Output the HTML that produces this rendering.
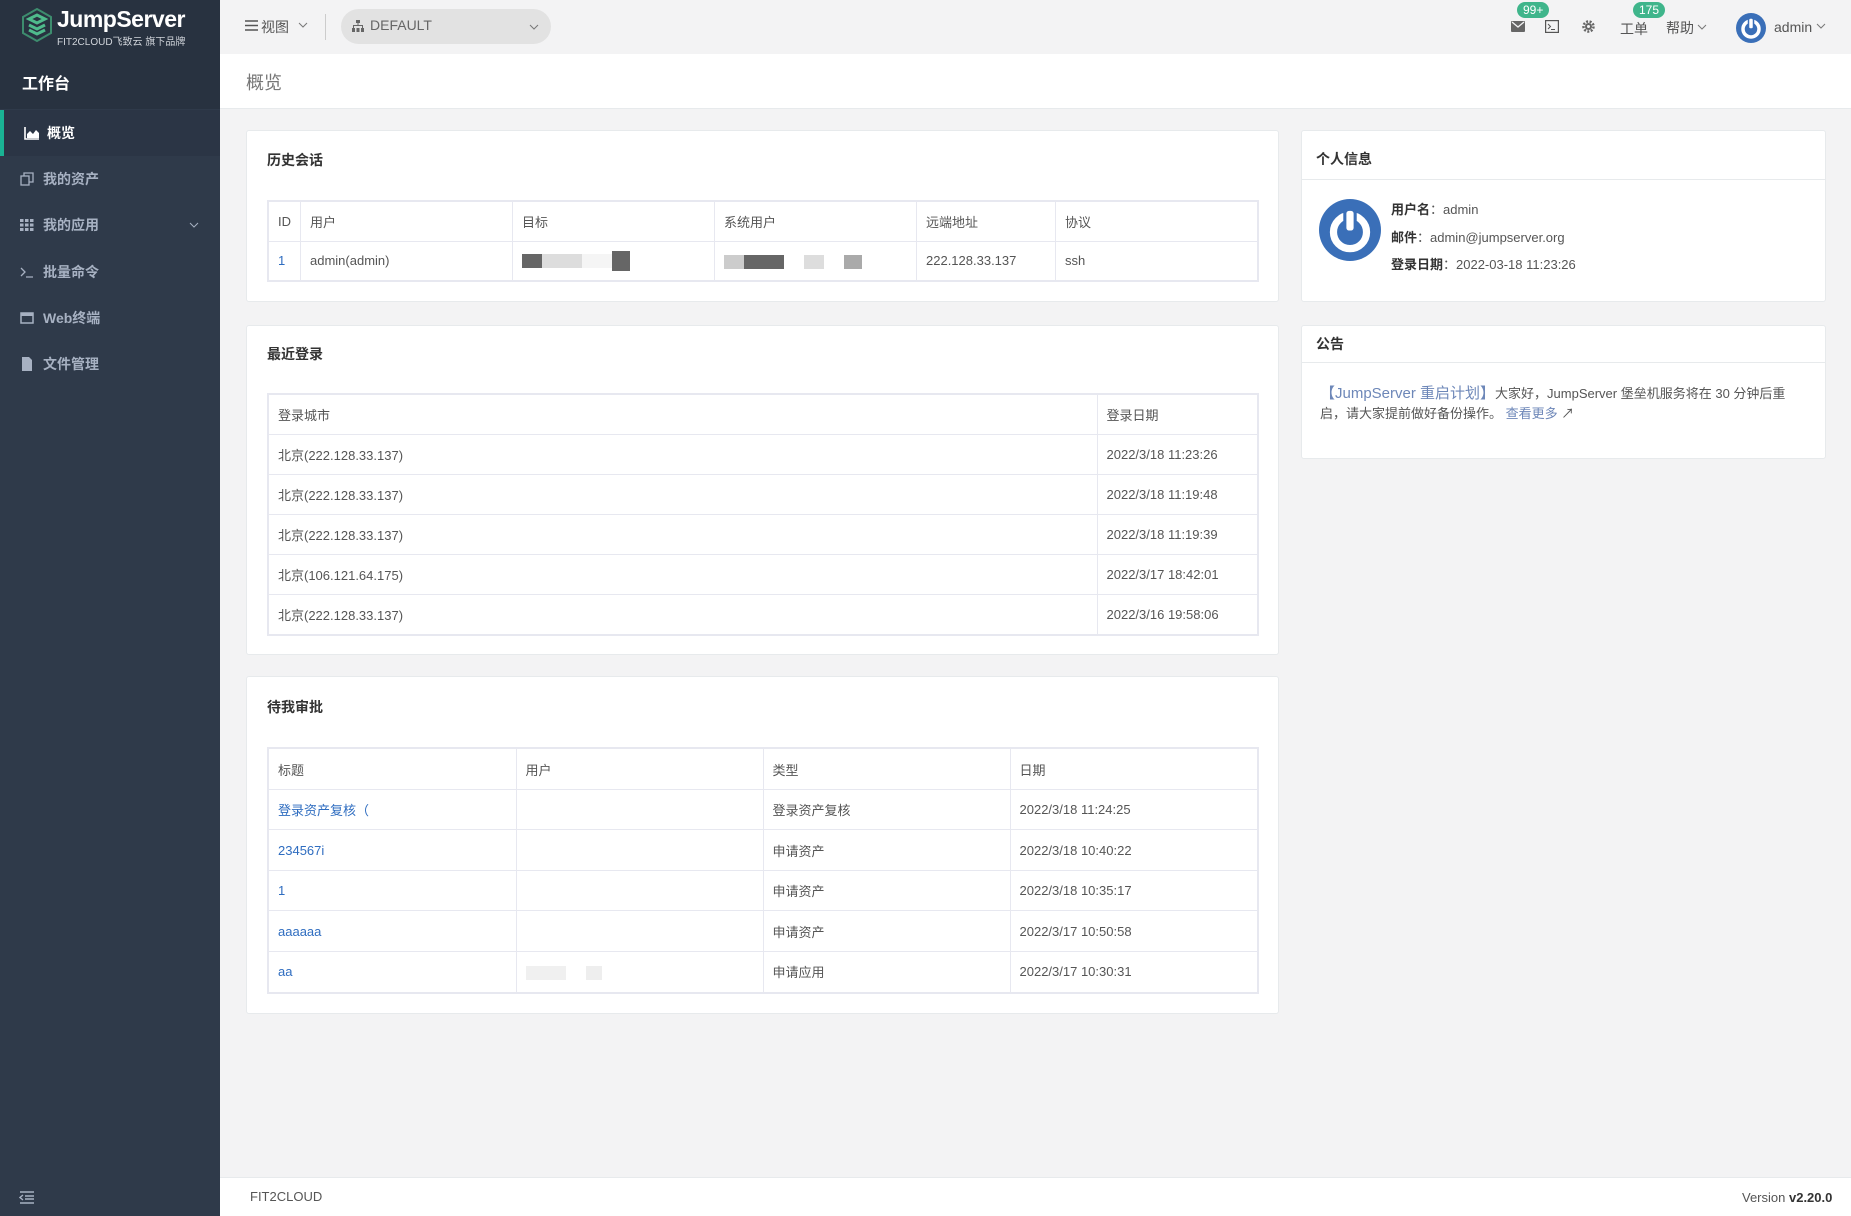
<!DOCTYPE html>
<html><head><meta charset="utf-8"><style>
*{box-sizing:border-box;margin:0;padding:0}
body{width:1851px;height:1216px;overflow:hidden;background:#f3f3f4;font-family:"Liberation Sans","Noto Sans CJK SC",sans-serif;font-size:14px;color:#555;position:relative}
.a{position:absolute}
#side{left:0;top:0;width:220px;height:1216px;background:#2f3a4a}
#sidetop{left:0;top:0;width:220px;height:109px;background:#283240}
.mi{position:absolute;left:0;width:220px;height:46px;color:#a7b1c2;font-size:14px;font-weight:bold;line-height:46px}
.mi svg{position:absolute;left:20px;top:16px}
.mi span{position:absolute;left:43px}
#hdr{left:220px;top:0;width:1631px;height:54px;background:#f3f3f4}
#title{left:220px;top:54px;width:1631px;height:55px;background:#fff;border-bottom:1px solid #e7eaec}
.card{position:absolute;background:#fff;border:1px solid #e7eaec;border-radius:3px}
.ct{position:absolute;left:20px;font-size:14px;font-weight:bold;color:#333}
table{position:absolute;border-collapse:collapse;border:2px solid #e7e8f0;font-size:13px;color:#555}
td{border:1px solid #e7e8f0;padding:0 9px;vertical-align:middle;white-space:nowrap}
th{border:1px solid #e7e8f0;padding:0 9px;text-align:left;font-weight:normal;color:#555;vertical-align:middle}
a{color:#2f6dc0;text-decoration:none}
.bl{display:inline-block;height:14px;vertical-align:middle}
.badge{position:absolute;background:#3fb58b;color:#fff;font-size:12px;border-radius:9px;height:16px;line-height:16px;padding:0 6px}
</style></head><body>
<div id="side" class="a"></div>
<div id="sidetop" class="a"></div>
<svg class="a" style="left:22px;top:8px" width="30" height="34" viewBox="0 0 30 34"><path d="M15 1 L29 9 L29 25 L15 33 L1 25 L1 9 Z" fill="none" stroke="#3d8c6e" stroke-width="2"/><path d="M7 11 L15 7 L23 11 L15 15 Z M7 17 L15 21 L23 17 M7 22 L15 26 L23 22" fill="none" stroke="#4fbb8c" stroke-width="3"/></svg>
<div class="a" style="left:57px;top:6px;color:#fff;font-size:23px;font-weight:bold;letter-spacing:-0.5px">JumpServer</div>
<div class="a" style="left:57px;top:33px;color:#d0d4da;font-size:10px">FIT2CLOUD飞致云 旗下品牌</div>
<div class="a" style="left:22px;top:70px;color:#fff;font-size:16px;font-weight:bold">工作台</div>
<div class="mi" style="top:110px;background:#2b3545;color:#fff;border-left:4px solid #1ab394"><svg width="16" height="14" viewBox="0 0 16 14" style="left:20px"><path d="M1 1V13H15" stroke="#fff" stroke-width="1.6" fill="none"/><path d="M3 12V8L6 5L9 8L12 4L15 7V12Z" fill="#fff"/></svg><span style="left:43px">概览</span></div>
<div class="mi" style="top:156px"><svg width="14" height="14" viewBox="0 0 14 14"><rect x="1" y="4" width="8" height="9" fill="none" stroke="#a7b1c2" stroke-width="1.3"/><path d="M4 4V1H13V10H9" fill="none" stroke="#a7b1c2" stroke-width="1.3"/></svg><span>我的资产</span></div>
<div class="mi" style="top:202px"><svg width="14" height="14" viewBox="0 0 14 14" fill="#a7b1c2"><rect x="0" y="1" width="3.5" height="3"/><rect x="5" y="1" width="3.5" height="3"/><rect x="10" y="1" width="3.5" height="3"/><rect x="0" y="5.5" width="3.5" height="3"/><rect x="5" y="5.5" width="3.5" height="3"/><rect x="10" y="5.5" width="3.5" height="3"/><rect x="0" y="10" width="3.5" height="3"/><rect x="5" y="10" width="3.5" height="3"/><rect x="10" y="10" width="3.5" height="3"/></svg><span>我的应用</span><svg width="10" height="8" style="left:189px;top:19px" viewBox="0 0 10 8"><path d="M1 2L5 6L9 2" stroke="#a7b1c2" fill="none"/></svg></div>
<div class="mi" style="top:249px"><svg width="14" height="14" viewBox="0 0 14 14"><path d="M1 3L5 7L1 11M6 12H13" stroke="#a7b1c2" stroke-width="1.3" fill="none"/></svg><span>批量命令</span></div>
<div class="mi" style="top:295px"><svg width="14" height="14" viewBox="0 0 14 14"><rect x="1" y="2" width="12" height="10" fill="none" stroke="#a7b1c2" stroke-width="1.5"/><rect x="1" y="2" width="12" height="3" fill="#a7b1c2"/></svg><span>Web终端</span></div>
<div class="mi" style="top:341px"><svg width="14" height="14" viewBox="0 0 14 14"><path d="M2 0H9L12 3V14H2Z" fill="#a7b1c2"/></svg><span>文件管理</span></div>
<svg class="a" style="left:19px;top:1191px" width="16" height="13" viewBox="0 0 16 13"><path d="M1 1H15M6 5H15M6 8H15M1 12H15M4 4L1 6.5L4 9" stroke="#a7b1c2" stroke-width="1.4" fill="none"/></svg>

<div id="hdr" class="a"></div>
<svg class="a" style="left:245px;top:20px" width="13" height="11" viewBox="0 0 13 11"><path d="M0 1H13M0 5.5H13M0 10H13" stroke="#555" stroke-width="1.5"/></svg>
<div class="a" style="left:261px;top:17px;font-size:14px;color:#555">视图</div>
<svg class="a" style="left:298px;top:22px" width="10" height="7" viewBox="0 0 10 7"><path d="M1 1L5 5L9 1" stroke="#777" fill="none"/></svg>
<div class="a" style="left:325px;top:14px;width:1px;height:26px;background:#ccc"></div>
<div class="a" style="left:341px;top:9px;width:210px;height:35px;background:#e2e2e2;border-radius:18px"></div>
<svg class="a" style="left:352px;top:20px" width="12" height="12" viewBox="0 0 12 12" fill="#666"><rect x="4" y="0" width="4" height="3"/><rect x="5.5" y="3" width="1" height="3"/><rect x="1" y="5" width="10" height="1"/><rect x="1" y="5" width="1" height="3"/><rect x="10" y="5" width="1" height="3"/><rect x="0" y="8" width="3" height="4"/><rect x="4.5" y="8" width="3" height="4"/><rect x="9" y="8" width="3" height="4"/></svg>
<div class="a" style="left:370px;top:17px;font-size:14px;color:#666">DEFAULT</div>
<svg class="a" style="left:529px;top:24px" width="10" height="7" viewBox="0 0 10 7"><path d="M1 1L5 5L9 1" stroke="#777" fill="none"/></svg>
<svg class="a" style="left:1511px;top:21px" width="14" height="11" viewBox="0 0 14 11"><rect width="14" height="11" rx="1" fill="#666"/><path d="M1 1L7 6L13 1" stroke="#f3f3f4" stroke-width="1.3" fill="none"/></svg>
<div class="badge" style="left:1517px;top:2px">99+</div>
<svg class="a" style="left:1545px;top:20px" width="14" height="13" viewBox="0 0 14 13"><rect x="0.6" y="0.6" width="12.8" height="11.8" fill="none" stroke="#555" stroke-width="1.2"/><path d="M3 4L5.5 6.5L3 9M6 9.5H10" stroke="#555" fill="none"/></svg>
<svg class="a" style="left:1582px;top:20px" width="13" height="13" viewBox="0 0 13 13"><circle cx="6.5" cy="6.5" r="5" fill="none" stroke="#666" stroke-width="2.5" stroke-dasharray="2 1.5"/><circle cx="6.5" cy="6.5" r="3.5" fill="#666"/><circle cx="6.5" cy="6.5" r="1.5" fill="#f3f3f4"/></svg>
<div class="a" style="left:1620px;top:19px;font-size:14px;color:#555">工单</div>
<div class="badge" style="left:1633px;top:2px">175</div>
<div class="a" style="left:1666px;top:18px;font-size:14px;color:#555">帮助</div>
<svg class="a" style="left:1697px;top:24px" width="10" height="7" viewBox="0 0 10 7"><path d="M1 1L5 5L9 1" stroke="#777" fill="none"/></svg>
<svg class="a" style="left:1736px;top:13px" width="30" height="30" viewBox="0 0 30 30"><circle cx="15" cy="15" r="15" fill="#3a6fb8"/><circle cx="15" cy="16" r="8" fill="none" stroke="#fff" stroke-width="3.5"/><rect x="12.5" y="5" width="5" height="11" rx="2" fill="#fff" stroke="#3a6fb8" stroke-width="1.5"/></svg>
<div class="a" style="left:1774px;top:19px;font-size:14px;color:#555">admin</div>
<svg class="a" style="left:1816px;top:23px" width="10" height="7" viewBox="0 0 10 7"><path d="M1 1L5 5L9 1" stroke="#777" fill="none"/></svg>

<div id="title" class="a"></div>
<div class="a" style="left:246px;top:69px;font-size:18px;color:#777">概览</div>

<div class="card" style="left:246px;top:130px;width:1033px;height:172px">
<div class="ct" style="top:19px">历史会话</div>
<table style="left:20px;top:69px;width:992px;height:82px">
<tr style="height:40px"><th style="width:32px">ID</th><th style="width:212px">用户</th><th style="width:202px">目标</th><th style="width:202px">系统用户</th><th style="width:139px">远端地址</th><th>协议</th></tr>
<tr><td><a>1</a></td><td>admin(admin)</td><td><span class="bl" style="width:20px;background:#666"></span><span class="bl" style="width:40px;background:#ddd"></span><span class="bl" style="width:30px;background:#f5f5f5"></span><span class="bl" style="width:18px;background:#666;height:20px"></span></td><td><span class="bl" style="width:20px;background:#ccc"></span><span class="bl" style="width:40px;background:#666"></span><span class="bl" style="width:20px;background:#fff"></span><span class="bl" style="width:20px;background:#ddd"></span><span class="bl" style="width:20px;background:#fff"></span><span class="bl" style="width:18px;background:#aaa"></span></td><td>222.128.33.137</td><td>ssh</td></tr>
</table></div>

<div class="card" style="left:246px;top:325px;width:1033px;height:330px">
<div class="ct" style="top:18px">最近登录</div>
<table style="left:20px;top:67px;width:992px;height:243px">
<tr><th>登录城市</th><th style="width:161px">登录日期</th></tr>
<tr><td>北京(222.128.33.137)</td><td>2022/3/18 11:23:26</td></tr>
<tr><td>北京(222.128.33.137)</td><td>2022/3/18 11:19:48</td></tr>
<tr><td>北京(222.128.33.137)</td><td>2022/3/18 11:19:39</td></tr>
<tr><td>北京(106.121.64.175)</td><td>2022/3/17 18:42:01</td></tr>
<tr><td>北京(222.128.33.137)</td><td>2022/3/16 19:58:06</td></tr>
</table></div>

<div class="card" style="left:246px;top:676px;width:1033px;height:338px">
<div class="ct" style="top:20px">待我审批</div>
<table style="left:20px;top:70px;width:992px;height:247px">
<tr><th style="width:248px">标题</th><th style="width:247px">用户</th><th style="width:247px">类型</th><th>日期</th></tr>
<tr><td><a>登录资产复核（</a></td><td></td><td>登录资产复核</td><td>2022/3/18 11:24:25</td></tr>
<tr><td><a>234567i</a></td><td></td><td>申请资产</td><td>2022/3/18 10:40:22</td></tr>
<tr><td><a>1</a></td><td></td><td>申请资产</td><td>2022/3/18 10:35:17</td></tr>
<tr><td><a>aaaaaa</a></td><td></td><td>申请资产</td><td>2022/3/17 10:50:58</td></tr>
<tr><td><a>aa</a></td><td><span class="bl" style="width:40px;background:#f0f0f0"></span><span class="bl" style="width:20px;background:#fff"></span><span class="bl" style="width:16px;background:#eee"></span></td><td>申请应用</td><td>2022/3/17 10:30:31</td></tr>
</table></div>

<div class="card" style="left:1301px;top:130px;width:525px;height:172px">
<div class="ct" style="top:18px;left:14px">个人信息</div>
<div class="a" style="left:0;top:48px;width:523px;height:1px;background:#e7eaec"></div>
<svg class="a" style="left:17px;top:68px" width="62" height="62" viewBox="0 0 30 30"><circle cx="15" cy="15" r="15" fill="#3a6fb8"/><circle cx="15" cy="16" r="8" fill="none" stroke="#fff" stroke-width="3.5"/><rect x="12.5" y="5" width="5" height="11" rx="2" fill="#fff" stroke="#3a6fb8" stroke-width="1.5"/></svg>
<div class="a" style="left:89px;top:65px;font-size:13px;color:#555;line-height:27.5px"><b style="color:#333">用户名</b>：admin<br><b style="color:#333">邮件</b>：admin@jumpserver.org<br><b style="color:#333">登录日期</b>：2022-03-18 11:23:26</div>
</div>

<div class="card" style="left:1301px;top:325px;width:525px;height:134px">
<div class="ct" style="top:8px;left:14px">公告</div>
<div class="a" style="left:0;top:36px;width:523px;height:1px;background:#e7eaec"></div>
<div class="a" style="left:18px;top:58px;width:490px;font-size:13px;color:#555;line-height:20px"><span style="color:#6d87b8;font-size:15px">【JumpServer 重启计划】</span>大家好，JumpServer 堡垒机服务将在 30 分钟后重启，请大家提前做好备份操作。 <span style="color:#6d87b8">查看更多</span> ↗</div>
</div>

<div class="a" style="left:220px;top:1177px;width:1631px;height:39px;background:#fff;border-top:1px solid #e7eaec"></div>
<div class="a" style="left:250px;top:1189px;font-size:13px;color:#555">FIT2CLOUD</div>
<div class="a" style="left:1742px;top:1190px;font-size:13px;color:#555">Version <b style="color:#333">v2.20.0</b></div>
</body></html>
